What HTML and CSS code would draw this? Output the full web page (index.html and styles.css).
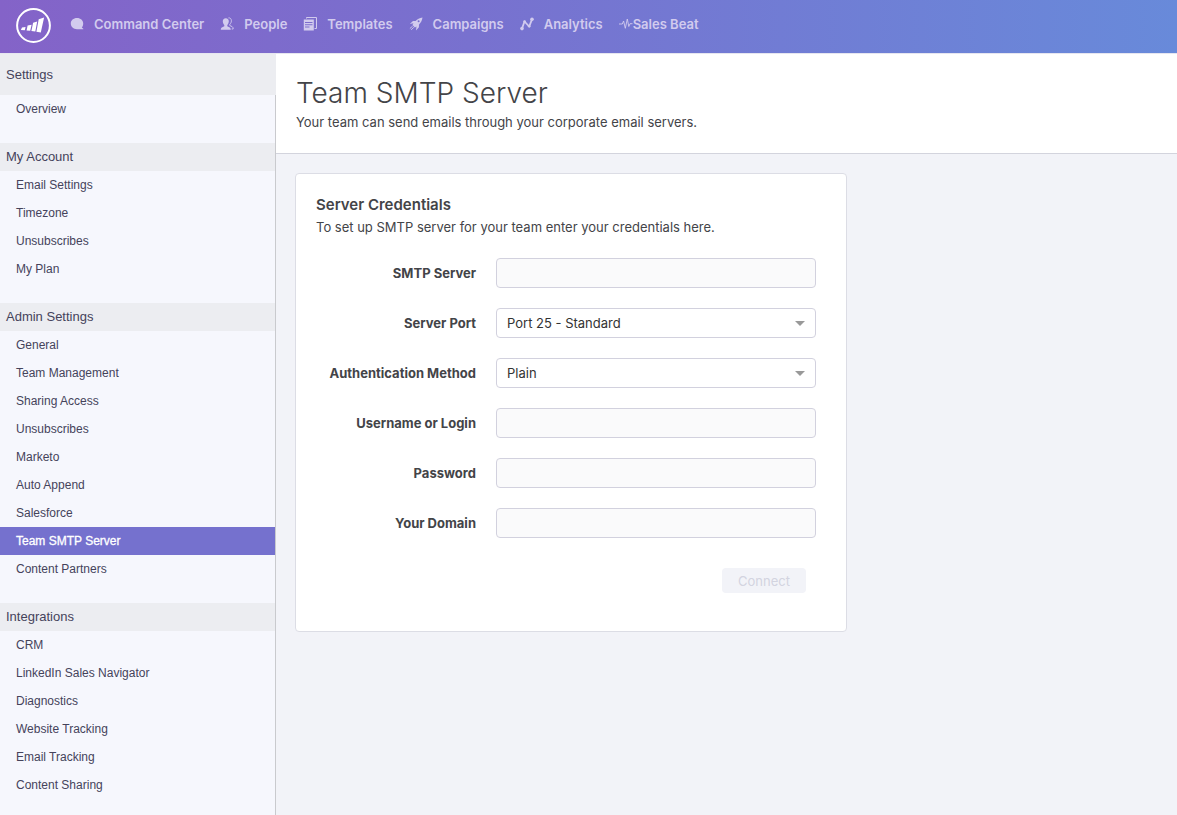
FILE: index.html
```html
<!DOCTYPE html>
<html lang="en">
<head>
<meta charset="utf-8">
<title>Team SMTP Server</title>
<meta name="viewport" content="width=device-width, initial-scale=1">
<link rel="stylesheet" href="styles.css">
</head>
<body>
<header class="topbar">
  <a class="logo" href="#" aria-label="Home">
    <svg viewBox="0 0 36 36" width="36" height="36"><circle cx="18.500" cy="17.500" r="16.400" fill="none" stroke="#fff" stroke-width="2"/><path fill="#fff" d="M7 19.600l3.600-.5-.8 3.100-3.900-.1zM12.600 17.600l4-.9-1.400 6.100-3.600-.3zM18.100 14.700l4.100-1.100-1.900 9.900-3.900-.4zM23.700 11.300l5.400-1.800-3.300 15.100-4.400-.8z"/></svg>
  </a>
  <nav class="nav">
    <a class="nav-item" href="#"><svg class="nav-icon" viewBox="0 0 14 14"><path fill="currentColor" d="M7 1C3.400 1 .8 3.400.8 6.600s2.600 5.700 6.200 5.700h6.200c.4 0 .4-.3.100-.5l-1.500-1.200c.9-1 1.400-2.400 1.400-4C13.200 3.400 10.600 1 7 1z"/></svg>Command Center</a>
    <a class="nav-item" href="#"><svg class="nav-icon" viewBox="0 0 14 14"><path fill="currentColor" d="M5.800 1.200c1.900 0 3 1.300 3 3.100 0 1.500-.6 2.900-1.500 3.600v1.300l2.500 1.200c.7.400 1 1.400 1 2.400H.8c0-1 .2-2 1-2.400l2.500-1.200V7.900c-.9-.7-1.500-2.100-1.500-3.600 0-1.800 1.100-3.100 3-3.100z"/><path fill="none" stroke="currentColor" stroke-width=".9" d="M8.400.9c1.800-.3 3 1 3 2.900 0 1.500-.7 2.700-1.600 3.400v1.300l2.400 1.200c.8.500 1 1.200 1 2.300h-1.500"/></svg>People</a>
    <a class="nav-item" href="#"><svg class="nav-icon" viewBox="0 0 14 14"><path fill="none" stroke="currentColor" d="M3.500 1.500v-1h10v11h-2"/><path fill="currentColor" fill-rule="evenodd" d="M.8 2.500h10v11h-10zM2 5v1h7.500V5zM2 7.200v1h7.500v-1zM2 9.400v1h4.500v-1z"/></svg>Templates</a>
    <a class="nav-item" href="#"><svg class="nav-icon" viewBox="0 0 14 14"><path fill="currentColor" fill-rule="evenodd" d="M13.500.5C10.500.9 8.200 2 6.600 4L4 4.100.8 6.900l3.600-.6-.9 1.700 2.400 2.400 1.600-.9-.5 4L9.900 10.300l.1-2.800c1.900-1.700 3.100-4 3.500-7zM9.600 3.300a1 1 0 1 1 0 2 1 1 0 0 1 0-2z"/><path stroke="currentColor" stroke-width=".9" d="M3.600 9.200L.9 11.500M4.800 10.300l-2.600 2.500"/></svg>Campaigns</a>
    <a class="nav-item" href="#"><svg class="nav-icon" viewBox="0 0 14 14"><path fill="none" stroke="currentColor" stroke-width="1.800" stroke-linejoin="round" d="M2 11.500L4.500 4.500l4.700 5L12 2.300"/><g fill="currentColor"><circle cx="2" cy="11.600" r="1.800"/><circle cx="4.600" cy="4.600" r="1.300"/><circle cx="9.200" cy="9.300" r="1.300"/><circle cx="12" cy="2.300" r="1.800"/></g></svg>Analytics</a>
    <a class="nav-item nav-item-tight" href="#"><svg class="nav-icon" viewBox="0 0 14 14"><path fill="none" stroke="currentColor" stroke-width=".9" d="M0 7h3.300l1.300-3 1.700 7.300L8.300 2l1.500 7.500 1.200-2.800h2.500"/></svg>Sales Beat</a>
  </nav>
</header>
<div class="layout">
  <aside class="sidebar">
    <h2 class="side-title side-title-first">Settings</h2>
    <ul class="side-list">
      <li><a href="#">Overview</a></li>
    </ul>
    <h2 class="side-title">My Account</h2>
    <ul class="side-list">
      <li><a href="#">Email Settings</a></li>
      <li><a href="#">Timezone</a></li>
      <li><a href="#">Unsubscribes</a></li>
      <li><a href="#">My Plan</a></li>
    </ul>
    <h2 class="side-title">Admin Settings</h2>
    <ul class="side-list">
      <li><a href="#">General</a></li>
      <li><a href="#">Team Management</a></li>
      <li><a href="#">Sharing Access</a></li>
      <li><a href="#">Unsubscribes</a></li>
      <li><a href="#">Marketo</a></li>
      <li><a href="#">Auto Append</a></li>
      <li><a href="#">Salesforce</a></li>
      <li><a class="active" href="#" aria-current="page">Team SMTP Server</a></li>
      <li><a href="#">Content Partners</a></li>
    </ul>
    <h2 class="side-title">Integrations</h2>
    <ul class="side-list">
      <li><a href="#">CRM</a></li>
      <li><a href="#">LinkedIn Sales Navigator</a></li>
      <li><a href="#">Diagnostics</a></li>
      <li><a href="#">Website Tracking</a></li>
      <li><a href="#">Email Tracking</a></li>
      <li><a href="#">Content Sharing</a></li>
    </ul>
  </aside>
  <main class="main">
    <div class="page-head">
      <h1>Team SMTP Server</h1>
      <p>Your team can send emails through your corporate email servers.</p>
    </div>
    <form class="card">
      <h2>Server Credentials</h2>
      <p>To set up SMTP server for your team enter your credentials here.</p>
      <div class="fields">
        <label for="server">SMTP Server</label>
        <input class="control" id="server" type="text">
        <label for="port">Server Port</label>
        <select class="control" id="port"><option>Port 25 - Standard</option></select>
        <label for="auth">Authentication Method</label>
        <select class="control" id="auth"><option>Plain</option></select>
        <label for="user">Username or Login</label>
        <input class="control" id="user" type="text">
        <label for="pass">Password</label>
        <input class="control" id="pass" type="password">
        <label for="domain">Your Domain</label>
        <input class="control" id="domain" type="text">
      </div>
      <div class="actions"><button type="button" disabled>Connect</button></div>
    </form>
  </main>
</div>
</body>
</html>
```
FILE: styles.css
```css
* { box-sizing: border-box; }
body {
  margin: 0;
  min-height: 100vh;
  display: flex;
  flex-direction: column;
  font: 13px/20px Inter, Roboto, sans-serif;
  color: #434448;
  background: #f2f3f8;
}
h1, h2, p, ul { margin: 0; padding: 0; }
ul { list-style: none; }
a { color: inherit; text-decoration: none; }

.topbar {
  display: flex;
  align-items: center;
  height: 54px;
  padding: 0 15px 1px;
  gap: 19px;
  border-bottom: 1px solid #e6e6f0;
  background: linear-gradient(90deg, #8463c8, #7871cf 40%, #688ada);
}
.logo { display: flex; }
.nav { display: flex; gap: 16px; padding-bottom: 4px; }
.nav-item {
  display: flex;
  align-items: center;
  gap: 10px;
  font-weight: 600;
  color: #d2cbee;
  white-space: nowrap;
}
.nav-item-tight { gap: 0; }
.nav-icon { width: 14px; height: 14px; flex: none; }

.layout { display: flex; flex: 1; }
.sidebar {
  width: 276px;
  flex: none;
  border-right: 1px solid #c9cace;
  background: #f6f7fd;
  font-family: "Liberation Sans", Arial, sans-serif;
  color: #45435b;
}
.side-title {
  padding: 0 6px;
  font-size: 13px;
  font-weight: 400;
  line-height: 28px;
  background: #ecedf1;
}
.side-title-first { margin-right: -1px; line-height: 41px; }
.side-list { padding-bottom: 20px; font-size: 12px; }
.side-list a { display: block; padding: 0 16px; line-height: 28px; }
.side-list .active { background: #7571ce; color: #fff; -webkit-text-stroke: 0.3px #fff; }

.main { flex: 1; min-width: 0; }
.page-head {
  height: 100px;
  padding: 20px 20px 0;
  background: #fff;
  border-bottom: 1px solid #d3d4dd;
}
.page-head h1 { font-size: 28px; line-height: 38px; font-weight: 300; }
.card {
  max-width: 552px;
  margin: 19px;
  padding: 20px 30px 38px 20px;
  background: #fff;
  border: 1px solid #dcdde5;
  border-radius: 4px;
}
.card h2 { font-size: 15px; line-height: 22px; font-weight: 600; }
.card p { line-height: 22px; }
.fields {
  display: grid;
  grid-template-columns: 160px minmax(0, 1fr);
  gap: 20px;
  margin-top: 20px;
}
.fields label { text-align: right; font-weight: 700; line-height: 30px; }
.control {
  width: 100%;
  height: 30px;
  padding: 0 10px;
  font: inherit;
  color: #333;
  background: #fafafb;
  border: 1px solid #d2d1de;
  border-radius: 4px;
}
select.control {
  appearance: none;
  background: #fff url("data:image/svg+xml,%3Csvg xmlns='http://www.w3.org/2000/svg' width='10' height='5'%3E%3Cpath d='M0 0h10L5 5z' fill='%23999'/%3E%3C/svg%3E") no-repeat right 10px center;
}
.actions { display: flex; justify-content: flex-end; margin: 30px 10px 0 0; }
.actions button {
  height: 25px;
  padding: 0 16px;
  border: 0;
  border-radius: 4px;
  font: inherit;
  color: #d3d4e0;
  background: #f2f3f8;
}
```
